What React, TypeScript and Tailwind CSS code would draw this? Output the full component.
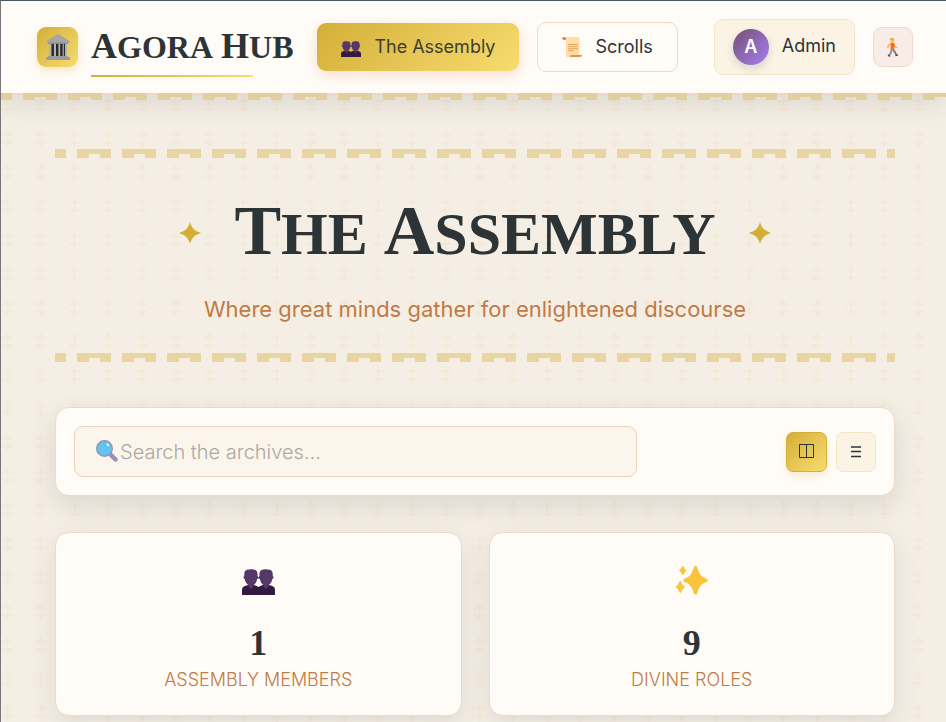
import type { ReactNode } from "react";

function Temple() {
  return (
    <svg viewBox="0 0 26 26" className="size-[26px]" aria-hidden="true">
      <path d="M13 0 1.500 7v2h23V7z" fill="#a6a6a6" />
      <path d="M4 9h18v13H4z" fill="#b5b3b0" />
      <path d="M6.500 9.500h2.400v12.500H6.500zM11 9.500h2.400v12.500H11zM15.200 9.500h2.400v12.500h-2.400zM18.800 9.500h1.200v12.500h-1.200z" fill="#26282a" />
      <path d="M3 8.600h20v1.200H3z" fill="#8c8c8c" />
      <path d="M3 22h20v1h2v3H1v-3h2z" fill="#9c9c9c" />
    </svg>
  );
}

function People({ className }: { className: string }) {
  return (
    <svg viewBox="0 0 33 26" className={className} aria-hidden="true">
      <path d="M0 26v-5c0-3 2-4 6-5h6c2 1 3.500 1 4.500 2C17.500 17 19 17 21 16h6c4 1 6 2 6 5v5z" fill="#321b41" />
      <path d="M14 8h5v1.500h-5z" fill="#553768" />
      <path
        d="M5 .8C7.500-.1 11.500-.1 13.500 1c1.800 1 2.300 3 2 6 1 .4.800 2.600-.4 3-.3 2.500-1.500 4.700-3.800 6.200V18L9 20l-2.300-2v-1.800C4.300 14.700 3 12.500 2.700 10c-1.400-.4-1.600-2.600-.4-3C2 4 2.500 1.800 5 .8z"
        fill="#553768"
      />
      <path
        d="M28 .8C25.500-.1 21.500-.1 19.500 1c-1.800 1-2.300 3-2 6-1 .4-.8 2.600.4 3 .3 2.500 1.500 4.700 3.800 6.200V18l2.300 2 2.300-2v-1.800c2.400-1.500 3.700-3.700 4-6.200 1.400-.4 1.600-2.600.4-3C31 4 30.500 1.800 28 .8z"
        fill="#553768"
      />
    </svg>
  );
}

function ScrollIcon() {
  return (
    <svg viewBox="0 0 20 20" className="size-5" aria-hidden="true">
      <path d="M1.500 0H16c1 0 1.500.600 1.500 1.500V18l-3 2H5.500C4.500 20 4 19.500 4 18.500V3z" fill="#ffdea7" />
      <path d="M1.500 0C.5 0 0 .5 0 1.300S.6 2.800 1.500 2.800H4V1.500C4 .600 3 0 1.500 0z" fill="#e59a52" />
      <path d="M2 1.300h1.200v1.500H2z" fill="#a5602d" />
      <path d="M6 7.500h10M6 9.700h10M6 11.800h10M6 13.700h6" stroke="#e9a35c" strokeWidth="1" />
      <path d="M9 18h9.500c1 0 1.500-.4 1.500-.7 0 1.700-.7 2.700-2 2.700H7.500C8.500 19.700 8.200 18 9 18z" fill="#ea9344" />
    </svg>
  );
}

function Walker() {
  return (
    <svg viewBox="0 0 12 19" className="h-[19px] w-3" aria-hidden="true">
      <path d="M4.800 11 4 14.500 2.200 17.500" fill="none" stroke="#8b8a94" strokeWidth="1.800" />
      <path d="M5.800 11l2 3 1.700 3" fill="none" stroke="#77757f" strokeWidth="1.800" />
      <path d="M1 17l2 1.500M8.500 17.700l2.500-.9" stroke="#4a3f5c" strokeWidth="1.300" />
      <path d="M3.500 6 1.200 7.500l-.4 2.500M7 6.500l1 2L10.300 10" fill="none" stroke="#fbb13a" strokeWidth="1.300" />
      <path d="M3.500 5h3.700l.6 3-.8 4H3.700z" fill="#fb6a1e" />
      <path d="M3.300.8h3.500c.8.600.9 3-.3 3.900H4.200C3.200 4 3 2 3.300.8z" fill="#fdc04d" />
      <path d="M3 1.500C3.200.2 4.500-.1 5.500.1c1.300.2 1.700.8 1.400 1.700z" fill="#f0a02b" />
    </svg>
  );
}

function Magnifier() {
  return (
    <svg viewBox="0 0 22 22" className="size-[22px]" aria-hidden="true">
      <path d="m14.500 14.500 5 5" stroke="#9b8fb8" strokeWidth="4.500" strokeLinecap="round" />
      <circle cx="8.500" cy="8.500" r="7.800" fill="#62c4ec" stroke="#9b8fb8" strokeWidth="1.400" />
      <path d="M10.500 3.300c2 0 3 1.200 2.500 3l-2-.5z" fill="#e6f8ff" />
    </svg>
  );
}

function Star() {
  return (
    <svg viewBox="0 0 22 22" className="size-[22px]" aria-hidden="true">
      <path d="M11 0c1.800 6.200 4.300 8.700 11 11-6.700 2.300-9.200 4.800-11 11C9.200 15.800 6.700 13.300 0 11 6.700 8.700 9.200 6.200 11 0z" fill="#d4af37" />
    </svg>
  );
}

function Sparkles() {
  return (
    <svg viewBox="0 0 33 29" className="h-[29px] w-[33px]" aria-hidden="true">
      <g fill="#fac33c">
        <path d="M20.500 0c1 0 1.500.5 1.800 1.500 2 6.500 3.500 9 9.200 11.200 1.700.7 1.700 2.600 0 3.300-5.700 2.200-7.200 4.500-9.200 11-.3 1-.8 1.500-1.800 1.500s-1.500-.5-1.800-1.500c-2-6.500-3.500-8.800-9.200-11-1.700-.7-1.700-2.600 0-3.300 5.700-2.200 7.200-4.700 9.200-11.200.3-1 .8-1.500 1.800-1.500z" />
        <path d="M7.800 0c1.200 0 1 3 4.200 4.500-3.200 1.500-3 4.500-4.200 4.500s-1-3-4.200-4.500C6.800 3 6.600 0 7.800 0zM5.300 15c1.400 0 1.200 4.200 5 6-3.800 1.800-3.600 6-5 6s-1.200-4.200-5-6c3.800-1.800 3.600-6 5-6z" />
      </g>
    </svg>
  );
}

function GridIcon() {
  return (
    <svg viewBox="0 0 15 15" className="size-[15px]" fill="none" stroke="#2d3436" aria-hidden="true">
      <path d="M.5.5h14v13H.500zM7.500.5v13" />
    </svg>
  );
}

function ListIcon() {
  return (
    <svg viewBox="0 0 10 12" className="h-3 w-[10px]" stroke="#2d3436" strokeWidth="1.500" aria-hidden="true">
      <path d="M0 1h10M0 5.500h10M0 10.500h10" />
    </svg>
  );
}

function Motif() {
  return (
    <svg className="pointer-events-none absolute inset-0 size-full" aria-hidden="true">
      <defs>
        <pattern id="motif" width="33.75" height="33.75" patternUnits="userSpaceOnUse" patternTransform="translate(-11 -14.100)">
          <g fill="none" stroke="#f2e9d6">
            <path d="M17 8v18" strokeWidth="1.500" />
            <path d="M11.500 13.500c3 0 4.500-.5 5.500-2 1 1.500 2.500 2 5.500 2M11.500 20.500c3 0 4.500.5 5.500 2 1-1.500 2.500-2 5.500-2" strokeWidth="1.700" />
          </g>
        </pattern>
      </defs>
      <rect width="100%" height="100%" fill="url(#motif)" />
    </svg>
  );
}

function Meander() {
  return (
    <div className="h-[9px] bg-[linear-gradient(90deg,#e8d5a0_25%,transparent_25%,transparent_50%,#e8d5a0_50%,#e8d5a0_75%,transparent_75%),linear-gradient(90deg,transparent_75%,#e8d5a0_75%)] bg-[length:45px_100%,45px_5px] bg-repeat-x" />
  );
}

function StatCard({ icon, value, label }: { icon: ReactNode; value: string; label: string }) {
  return (
    <article className="flex flex-col items-center rounded-[14px] border border-[#efd9c9] bg-[#fffcf7] pt-[29px] pb-[23px] shadow-[0_9px_27px_rgba(45,52,54,0.1)]">
      <div className="flex h-9 items-center">{icon}</div>
      <p className="mt-[23px] font-['Liberation_Serif',serif] text-4xl leading-11 font-bold">{value}</p>
      <p className="mt-[3px] text-lg leading-6 font-light text-[#c07a45] uppercase">{label}</p>
    </article>
  );
}

export default function App() {
  return (
    <div className="relative min-h-screen overflow-hidden border-t border-l border-t-[#455a64] border-l-[#77767a] bg-[#f5eee5] pb-[6px] font-[Inter,sans-serif] text-[#2d3436]">
      <Motif />
      <header className="relative bg-[#fffcf7] shadow-[0_9px_27px_rgba(45,52,54,0.13)]">
        <div className="flex h-[92px] items-center pr-[33px] pl-9">
          <div className="flex shrink-0 items-center gap-[13px]">
            <div className="flex h-10 w-[41px] items-center justify-center rounded-[9px] bg-linear-135 from-[#d4af37] to-[#f7dc6f] shadow-[0_4px_9px_rgba(212,175,55,0.25)]">
              <Temple />
            </div>
            <div className="relative flex items-baseline gap-2 pb-[2px] font-['Liberation_Serif',serif] text-[32px] leading-10 font-bold whitespace-nowrap uppercase">
              <span className="inline-block first-letter:text-[36px]">Agora</span>{" "}
              <span className="inline-block first-letter:text-[36px]">Hub</span>
              <span className="absolute -bottom-2 left-0 h-[2px] w-4/5 bg-linear-90 from-[#d4af37] to-[#f7dc6f]" />
            </div>
          </div>
          <nav className="ml-auto flex shrink-0 items-center gap-[18px] text-lg">
            <button className="flex h-12 items-center gap-[13px] rounded-[9px] bg-linear-135 from-[#d4af37] to-[#f7dc6f] px-6 text-[#3c4030] shadow-[0_4px_13px_rgba(224,150,110,0.3)]">
              <People className="mt-1 h-4 w-5" />
              The Assembly
            </button>
            <button className="flex h-[50px] items-center gap-[13px] rounded-[9px] border border-[#efd9c9] px-6">
              <ScrollIcon />
              Scrolls
            </button>
          </nav>
          <div className="ml-9 flex shrink-0 items-center gap-[18px]">
            <div className="flex h-14 items-center gap-[13px] rounded-[9px] border border-[#f3e5c3] bg-[#fbf3e4] px-[18px] text-lg">
              <span className="flex size-9 items-center justify-center rounded-full bg-linear-135 from-[#784e73] to-[#a480f5] font-semibold text-white shadow-[0_4px_9px_rgba(45,52,54,0.15)]">
                A
              </span>
              <span className="pb-[2px]">Admin</span>
            </div>
            <button aria-label="Leave" className="flex size-10 items-center justify-center rounded-[9px] border border-[#efd9ce] bg-[#f8ede6]">
              <Walker />
            </button>
          </div>
        </div>
        <div className="absolute inset-x-0 top-full h-[2px] bg-[#eed8cb]" />
        <div className="absolute inset-x-0 top-full h-[7px] bg-[linear-gradient(90deg,#e2cf9f_25%,transparent_25%,transparent_50%,#e2cf9f_50%,#e2cf9f_75%,transparent_75%),linear-gradient(90deg,transparent_75%,#e2cf9f_75%)] bg-[length:45px_100%,45px_4px] bg-repeat-x" />
      </header>

      <main className="relative mt-14 mr-[51px] ml-[54px]">
        <section>
          <Meander />
          <div className="flex flex-col items-center pt-[34px] pb-[29px]">
            <div className="flex items-center gap-[33px]">
              <Star />
              <h1 className="flex items-baseline gap-4 font-['Liberation_Serif',serif] text-[60px] leading-[78px] font-bold whitespace-nowrap uppercase">
                <span className="inline-block first-letter:text-[70px]">The</span>{" "}
                <span className="inline-block first-letter:text-[70px]">Assembly</span>
              </h1>
              <Star />
            </div>
            <p className="mt-[21px] text-[22px] leading-[30px] text-[#c07a45]">Where great minds gather for enlightened discourse</p>
          </div>
          <Meander />
        </section>

        <section className="mt-[45px] flex items-center justify-between rounded-[14px] border border-[#efd9c9] bg-[#fffcf7] p-[18px] shadow-[0_9px_27px_rgba(45,52,54,0.13)]">
          <div className="relative w-[563px]">
            <label htmlFor="archive-search" className="absolute top-[14px] left-[22px]">
              <Magnifier />
            </label>
            <input
              id="archive-search"
              type="search"
              aria-label="Search the archives"
              placeholder="Search the archives..."
              className="block h-[51px] w-full rounded-[9px] border border-[#ecd2bb] bg-[#fcf5eb] pl-[45px] text-xl font-light outline-none placeholder:text-[#aaa9a5]"
            />
          </div>
          <div className="flex gap-[9px]">
            <button
              aria-label="Grid view"
              className="flex h-10 w-[41px] items-center justify-center rounded-[7px] border border-[#d4af37] bg-linear-135 from-[#d4af37] to-[#f7dc6f] shadow-[0_4px_9px_rgba(212,175,55,0.2)]"
            >
              <GridIcon />
            </button>
            <button aria-label="List view" className="flex size-10 items-center justify-center rounded-[7px] border border-[#f3e5c3] bg-[#fbf3e4]">
              <ListIcon />
            </button>
          </div>
        </section>

        <section className="mt-9 grid grid-cols-2 gap-[27px]">
          <StatCard icon={<People className="mt-1 h-[26px] w-[33px]" />} value="1" label="Assembly Members" />
          <StatCard icon={<Sparkles />} value="9" label="Divine Roles" />
        </section>
      </main>
    </div>
  );
}
